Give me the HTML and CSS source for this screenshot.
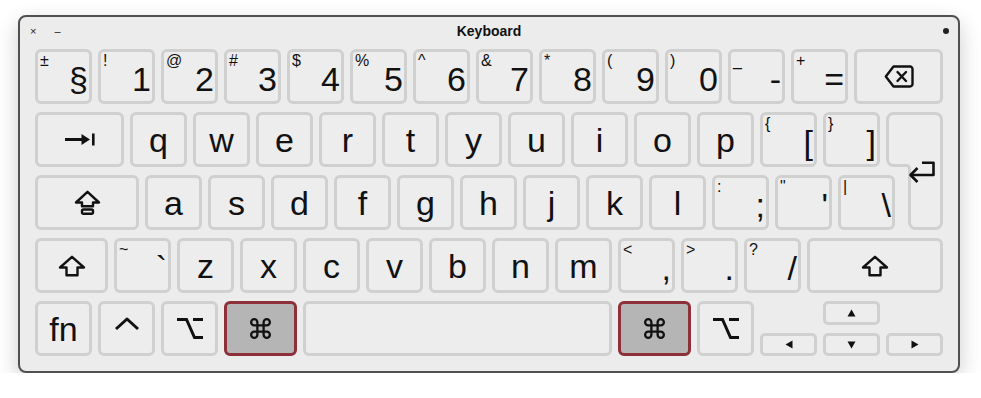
FILE: index.html
```html
<!DOCTYPE html>
<html>
<head>
  <meta charset="UTF-8">
  <title>Keyboard</title>
  <link rel="stylesheet" href="styles.css">
</head>
<body>
  <div class="window">
    <div class="titlebar">
      <div class="controls">
        <span class="ctl">×</span>
        <span class="ctl">–</span>
      </div>
      <div class="title">Keyboard</div>
      <div class="extra"><span class="dot"></span></div>
    </div>

    <div class="board">
      <!-- number row -->
      <div class="row">
        <div class="key dual"><span class="alt">±</span><span class="main">§</span></div>
        <div class="key dual"><span class="alt">!</span><span class="main">1</span></div>
        <div class="key dual"><span class="alt">@</span><span class="main">2</span></div>
        <div class="key dual"><span class="alt">#</span><span class="main">3</span></div>
        <div class="key dual"><span class="alt">$</span><span class="main">4</span></div>
        <div class="key dual"><span class="alt">%</span><span class="main">5</span></div>
        <div class="key dual"><span class="alt">^</span><span class="main">6</span></div>
        <div class="key dual"><span class="alt">&amp;</span><span class="main">7</span></div>
        <div class="key dual"><span class="alt">*</span><span class="main">8</span></div>
        <div class="key dual"><span class="alt">(</span><span class="main">9</span></div>
        <div class="key dual"><span class="alt">)</span><span class="main">0</span></div>
        <div class="key dual"><span class="alt">_</span><span class="main">-</span></div>
        <div class="key dual"><span class="alt">+</span><span class="main">=</span></div>
        <div class="key fill">
          <svg class="ico" width="30" height="23" viewBox="0 0 30 23">
            <path d="M9.5 1.5 H26 A2.5 2.5 0 0 1 28.5 4 V19 A2.5 2.5 0 0 1 26 21.5 H9.5 L1.8 11.5 Z"/>
            <path d="M13.5 7 L22 16 M22 7 L13.5 16" stroke-linecap="round"/>
          </svg>
        </div>
      </div>

      <!-- top letter row -->
      <div class="row">
        <div class="key k-tab">
          <svg width="30" height="13" viewBox="0 0 30 13">
            <path d="M0 6.5 H19" stroke="#111" stroke-width="3"/>
            <path d="M16.5 1 L25 6.5 L16.5 12 Z" fill="#111"/>
            <rect x="27" y="0.5" width="2.6" height="12" fill="#111"/>
          </svg>
        </div>
        <div class="key">q</div>
        <div class="key">w</div>
        <div class="key">e</div>
        <div class="key">r</div>
        <div class="key">t</div>
        <div class="key">y</div>
        <div class="key">u</div>
        <div class="key">i</div>
        <div class="key">o</div>
        <div class="key">p</div>
        <div class="key dual"><span class="alt">{</span><span class="main">[</span></div>
        <div class="key dual"><span class="alt">}</span><span class="main">]</span></div>
        <div class="key-return">
          <svg class="return-shape" width="57" height="118" viewBox="0 0 57 118">
            <path class="return-face" d="M7.5 1.5 H49.5 A6 6 0 0 1 55.5 7.5 V110.5 A6 6 0 0 1 49.5 116.5 H29.5 A6 6 0 0 1 23.5 110.5 V56.5 A3 3 0 0 0 20.5 53.5 H7.5 A6 6 0 0 1 1.5 47.5 V7.5 A6 6 0 0 1 7.5 1.5 Z"/>
            <path class="ico-line" d="M36 50.8 H47.5 V63 H25"/>
            <path class="ico-line" d="M31.5 56 L24.5 63 L31.5 70"/>
          </svg>
        </div>
      </div>

      <!-- home row -->
      <div class="row">
        <div class="key k-caps">
          <svg class="ico" width="27" height="25" viewBox="0 0 27 25">
            <path d="M13.5 1.8 L25 12.5 H19 V16.3 H8 V12.5 H2 Z"/>
            <rect x="8" y="19.5" width="11" height="4.3" rx="1.5"/>
          </svg>
        </div>
        <div class="key">a</div>
        <div class="key">s</div>
        <div class="key">d</div>
        <div class="key">f</div>
        <div class="key">g</div>
        <div class="key">h</div>
        <div class="key">j</div>
        <div class="key">k</div>
        <div class="key">l</div>
        <div class="key dual"><span class="alt">:</span><span class="main">;</span></div>
        <div class="key dual"><span class="alt">"</span><span class="main">'</span></div>
        <div class="key dual"><span class="alt">|</span><span class="main">\</span></div>
        <div class="return-gap"></div>
      </div>

      <!-- bottom letter row -->
      <div class="row">
        <div class="key k-shift">
          <svg class="ico" width="28" height="22" viewBox="0 0 28 22">
            <path d="M14 1.8 L26 12.5 H19.5 V20.2 H8.5 V12.5 H2 Z"/>
          </svg>
        </div>
        <div class="key dual"><span class="alt">~</span><span class="main">`</span></div>
        <div class="key">z</div>
        <div class="key">x</div>
        <div class="key">c</div>
        <div class="key">v</div>
        <div class="key">b</div>
        <div class="key">n</div>
        <div class="key">m</div>
        <div class="key dual"><span class="alt">&lt;</span><span class="main">,</span></div>
        <div class="key dual"><span class="alt">&gt;</span><span class="main">.</span></div>
        <div class="key dual"><span class="alt">?</span><span class="main">/</span></div>
        <div class="key fill">
          <svg class="ico" width="28" height="22" viewBox="0 0 28 22">
            <path d="M14 1.8 L26 12.5 H19.5 V20.2 H8.5 V12.5 H2 Z"/>
          </svg>
        </div>
      </div>

      <!-- modifier row -->
      <div class="row">
        <div class="key">fn</div>
        <div class="key">
          <svg class="ico up-a-bit" width="26" height="14" viewBox="0 0 26 14">
            <path d="M2 12 L13 2 L24 12" stroke-width="3"/>
          </svg>
        </div>
        <div class="key">
          <svg class="ico" width="28" height="23" viewBox="0 0 28 23">
            <path d="M1 2.5 H10.5 L18.5 20.5 H27 M17 2.5 H27" stroke-width="3" stroke-linejoin="miter"/>
          </svg>
        </div>
        <div class="key k-cmd active">
          <svg class="ico" width="25" height="25" viewBox="0 0 24 24">
            <path d="M9 6 A3 3 0 1 0 6 9 H18 A3 3 0 1 0 15 6 V18 A3 3 0 1 0 18 15 H6 A3 3 0 1 0 9 18 Z" stroke-width="2.2"/>
          </svg>
        </div>
        <div class="key fill"></div>
        <div class="key k-cmd active">
          <svg class="ico" width="25" height="25" viewBox="0 0 24 24">
            <path d="M9 6 A3 3 0 1 0 6 9 H18 A3 3 0 1 0 15 6 V18 A3 3 0 1 0 18 15 H6 A3 3 0 1 0 9 18 Z" stroke-width="2.2"/>
          </svg>
        </div>
        <div class="key">
          <svg class="ico" width="28" height="23" viewBox="0 0 28 23">
            <path d="M1 2.5 H10.5 L18.5 20.5 H27 M17 2.5 H27" stroke-width="3" stroke-linejoin="miter"/>
          </svg>
        </div>
        <div class="arrows">
          <div class="key small k-up">
            <svg width="9" height="8" viewBox="0 0 9 8"><path d="M4.5 0.5 L8.5 7.5 H0.5 Z" fill="#111"/></svg>
          </div>
          <div class="key small k-low">
            <svg width="8" height="9" viewBox="0 0 8 9"><path d="M0.5 4.5 L7.5 0.5 V8.5 Z" fill="#111"/></svg>
          </div>
          <div class="key small k-low">
            <svg width="9" height="8" viewBox="0 0 9 8"><path d="M0.5 0.5 H8.5 L4.5 7.5 Z" fill="#111"/></svg>
          </div>
          <div class="key small k-low">
            <svg width="8" height="9" viewBox="0 0 8 9"><path d="M7.5 4.5 L0.5 0.5 V8.5 Z" fill="#111"/></svg>
          </div>
        </div>
      </div>
    </div>
  </div>
</body>
</html>
```

FILE: styles.css
```css
body {
  margin: 0;
  background: #ffffff;
  font-family: "Liberation Sans", Arial, sans-serif;
  color: #111;
}

.window {
  box-sizing: border-box;
  width: 942px;
  margin: 15px 0 0 18px;
  border: 2px solid #505050;
  border-radius: 8px;
  background: #ececec;
  box-shadow: 0 8px 22px rgba(0, 0, 0, 0.2);
}

.titlebar {
  display: grid;
  grid-template-columns: 1fr auto 1fr;
  align-items: center;
  height: 27px;
}
.controls {
  display: flex;
  gap: 18px;
  padding-left: 10px;
  font-size: 11px;
  color: #222;
}
.title {
  font-size: 14px;
  font-weight: bold;
  color: #111;
}
.extra {
  display: flex;
  justify-content: flex-end;
  padding-right: 9px;
}
.dot {
  width: 6px;
  height: 6px;
  border-radius: 50%;
  background: #222;
}

.board {
  display: flex;
  flex-direction: column;
  gap: 8px;
  padding: 5px 15px 15px;
}
.row {
  display: flex;
  gap: 6px;
  height: 55px;
}

.key {
  box-sizing: border-box;
  flex: none;
  width: 57px;
  height: 55px;
  border: 3px solid #d0d0d0;
  border-radius: 6px;
  background: #ededed;
  display: flex;
  align-items: center;
  justify-content: center;
  font-size: 34px;
  line-height: 1;
}
.key.fill { flex: 1; }
.k-tab { width: 89px; }
.k-caps { width: 104px; }
.k-shift { width: 73px; }
.k-cmd { width: 73px; }
.key.active {
  background: #b5b5b5;
  border-color: #8d3039;
}

.key.dual {
  display: grid;
  grid-template-columns: 1fr;
  grid-template-rows: 1fr;
  justify-content: stretch;
  align-content: stretch;
  align-items: stretch;
  padding: 1px 1px 5px 2px;
}
.dual .alt,
.dual .main {
  grid-area: 1 / 1;
}
.dual .alt {
  align-self: start;
  justify-self: start;
  font-size: 16px;
}
.dual .main {
  align-self: end;
  justify-self: end;
}

.ico {
  fill: none;
  stroke: #111;
  stroke-width: 2.4;
  stroke-linejoin: round;
}
.up-a-bit { margin-top: -9px; }

.key-return {
  position: relative;
  flex: none;
  width: 57px;
  height: 55px;
}
.return-shape {
  position: absolute;
  top: 0;
  left: 0;
}
.return-face {
  fill: #ededed;
  stroke: #d0d0d0;
  stroke-width: 3;
}
.ico-line {
  fill: none;
  stroke: #111;
  stroke-width: 2.6;
  stroke-linejoin: round;
}
.return-gap { flex: 1; }

.arrows {
  flex: none;
  width: 183px;
  display: grid;
  grid-template-columns: repeat(3, 57px);
  grid-template-rows: 24px 23px;
  column-gap: 6px;
  row-gap: 8px;
}
.key.small {
  width: 57px;
  height: 100%;
  border-radius: 5px;
}
.k-up { grid-column: 2; grid-row: 1; }
.k-low { grid-row: 2; }
```
